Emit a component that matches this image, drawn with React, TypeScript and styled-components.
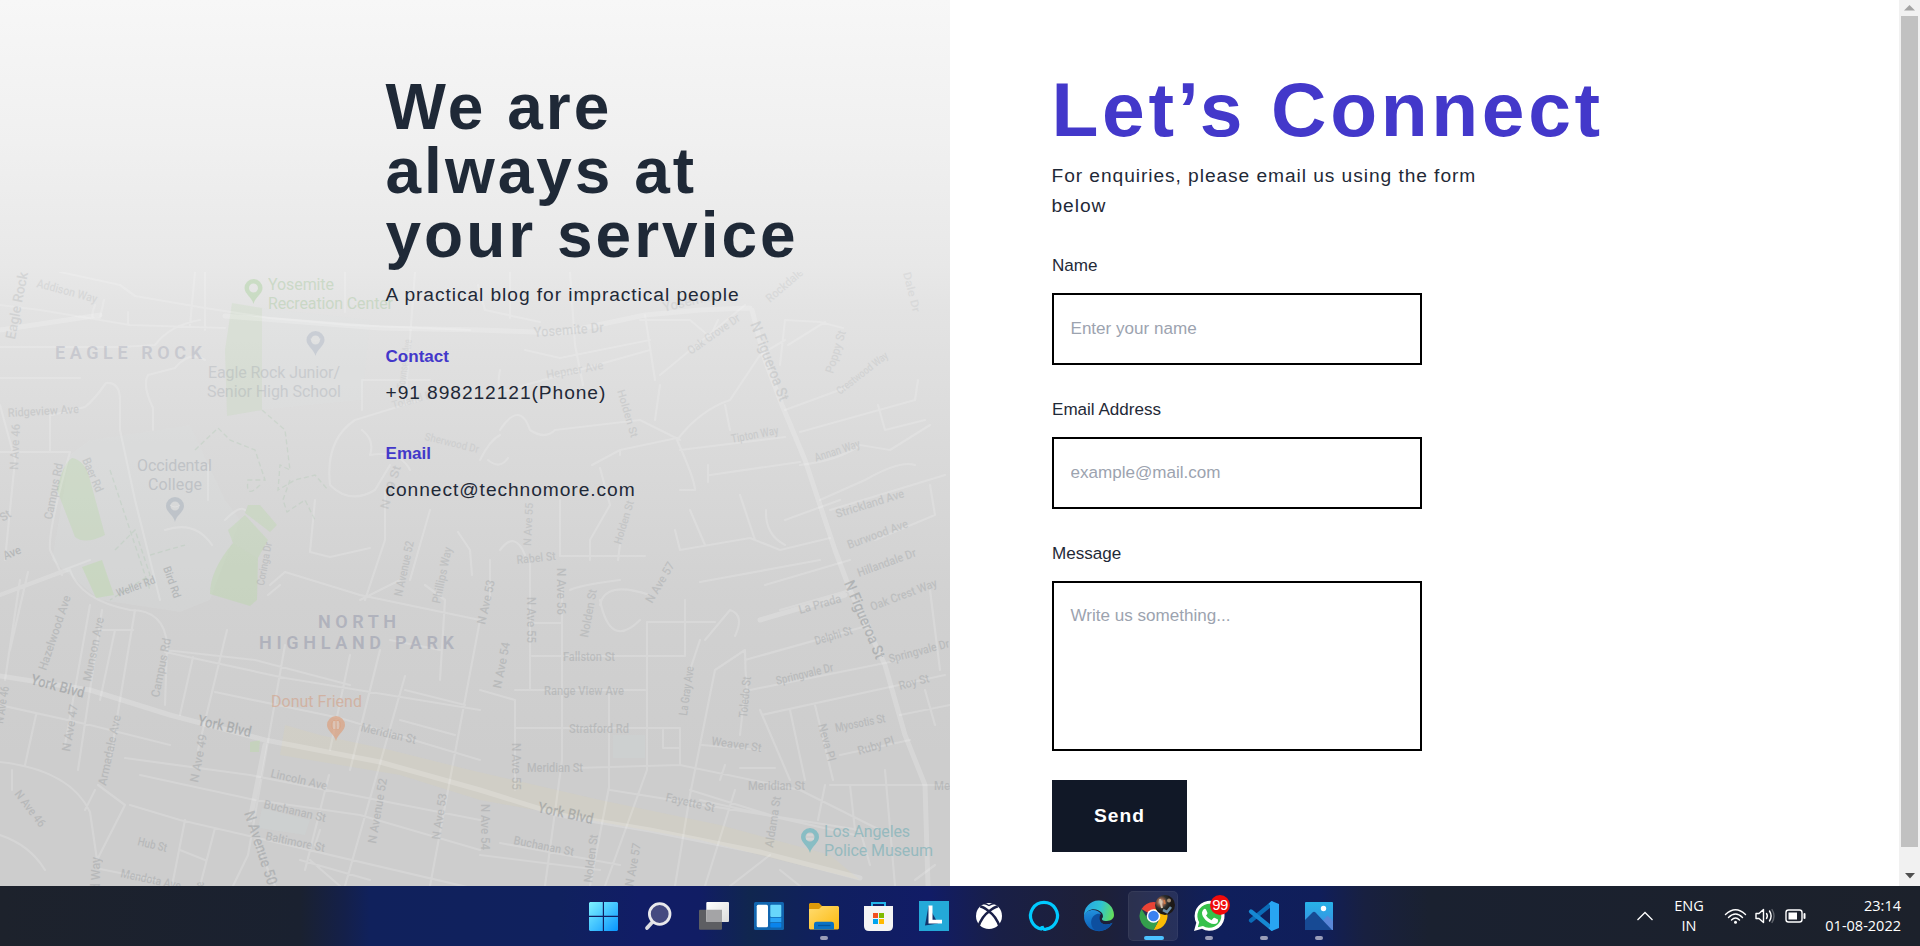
import React from "react";
import styled, { createGlobalStyle } from "styled-components";

const GlobalStyle = createGlobalStyle`
  *, *::before, *::after { box-sizing: border-box; }
  body {
    margin: 0;
    overflow: hidden;
    background: #fff;
    font-family: "Liberation Sans", Arial, sans-serif;
    color: #1f2937;
  }
  h1, h2, p { margin: 0; }
`;

const Desktop = styled.div`
  display: flex;
  flex-direction: column;
  width: 1920px;
  height: 946px;
  overflow: hidden;
`;

const Browser = styled.div`
  display: flex;
  height: 886px;
`;

const Page = styled.main`
  display: flex;
  flex: 1;
`;

const InfoPanel = styled.section`
  position: relative;
  width: 950px;
  padding: 75px 0 0 385.5px;
  overflow: hidden;
  background: linear-gradient(
    180deg,
    #f7f7f7 0%,
    #f0f0f0 16%,
    #e8e8e8 30%,
    #e3e3e3 35%,
    #dadada 50%,
    #d1d1d1 68%,
    #cdcdcd 85%,
    #cdcdcd 100%
  );
`;

const MapArt = styled.svg`
  position: absolute;
  left: 0;
  top: 272px;
  width: 950px;
  height: 614px;
`;

const InfoContent = styled.div`
  position: relative;
  width: 424px;
`;

const Headline = styled.h1`
  font-size: 64px;
  line-height: 64px;
  letter-spacing: 3px;
  font-weight: 700;
`;

const Lead = styled.p<{ $top: number }>`
  margin-top: ${(p) => p.$top}px;
  font-size: 19.2px;
  line-height: 30px;
  letter-spacing: 0.93px;
`;

const InfoTitle = styled.h2<{ $top: number }>`
  margin-top: ${(p) => p.$top}px;
  font-size: 17.07px;
  line-height: 26px;
  font-weight: 700;
  color: #4338ca;
`;

const FormPanel = styled.section`
  flex: 1;
  padding: 71px 0 0 101.5px;
  background: #fff;
`;

const FormTitle = styled.h1`
  font-size: 76.8px;
  line-height: 77px;
  letter-spacing: 3.64px;
  font-weight: 700;
  color: #4338ca;
`;

const FormLead = styled(Lead)`
  width: 455px;
`;

const Form = styled.form`
  display: flex;
  flex-direction: column;
  align-items: flex-start;
  margin-top: 32px;
  padding-left: 0.5px;
`;

const Field = styled.label`
  display: flex;
  flex-direction: column;
  gap: 14px;
  margin-bottom: 32px;
  font-size: 17.07px;
  line-height: 26px;
`;

const fieldBox = `
  display: block;
  width: 370px;
  border: 2px solid #000;
  border-radius: 0;
  background: #fff;
  font: 17.07px/26px "Liberation Sans", Arial, sans-serif;
  color: #1f2937;
  outline: none;
  resize: none;
  &::placeholder { color: #9ca3af; opacity: 1; }
`;

const Input = styled.input`
  ${fieldBox}
  height: 72px;
  padding: 0 16.5px;
`;

const TextArea = styled.textarea`
  ${fieldBox}
  height: 170px;
  padding: 20px 16.5px;
  overflow: hidden;
`;

const SendButton = styled.button`
  width: 135px;
  height: 72px;
  margin-top: -3px;
  padding: 0;
  border: 0;
  background: #111827;
  color: #fff;
  font: 700 19.2px/30px "Liberation Sans", Arial, sans-serif;
  letter-spacing: 0.96px;
`;

const ScrollTrack = styled.div`
  display: flex;
  flex-direction: column;
  align-items: center;
  width: 21px;
  background: #f1f1f1;
`;

const ScrollArrow = styled.div<{ $height: number; $offset?: number }>`
  display: flex;
  align-items: center;
  justify-content: center;
  height: ${(p) => p.$height}px;
  padding-top: ${(p) => p.$offset ?? 0}px;
`;

const ScrollThumb = styled.div`
  width: 17px;
  height: 831px;
  margin-right: 0;
  background: #c1c1c1;
`;

const Taskbar = styled.footer`
  display: flex;
  justify-content: space-between;
  height: 60px;
  padding-left: 578px;
  font-family: "Open Sans", "Noto Sans", sans-serif;
  color: #fff;
  background: linear-gradient(
    90deg,
    #1d222c 0,
    #1a2130 300px,
    #14204a 345px,
    #10215c 370px,
    #10215e 560px,
    #111d66 640px,
    #111d64 700px,
    #10264f 750px,
    #101f60 830px,
    #111c66 930px,
    #191f46 1000px,
    #1e2037 1100px,
    #17204a 1160px,
    #0f1f5c 1220px,
    #101e5a 1320px,
    #182040 1365px,
    #1a2130 1430px,
    #1c212b 1920px
  );
`;

const TaskIcons = styled.nav`
  display: flex;
  gap: 5px;
  padding-top: 5px;
`;

const Tile = styled.div<{ $active?: boolean }>`
  position: relative;
  width: 50px;
  height: 50px;
  border-radius: 5px;
  background: ${(p) => (p.$active ? "rgba(255,255,255,0.08)" : "transparent")};
  box-shadow: ${(p) => (p.$active ? "inset 0 0 0 1px rgba(255,255,255,0.05)" : "none")};
  svg { display: block; }
`;

const Indicator = styled.span<{ $active?: boolean }>`
  position: absolute;
  left: ${(p) => (p.$active ? 16 : 22)}px;
  top: 45px;
  width: ${(p) => (p.$active ? 20 : 8)}px;
  height: 4px;
  border-radius: 2px;
  background: ${(p) => (p.$active ? "#4cc2ff" : "#9a9db8")};
`;

const Badge = styled.span`
  position: absolute;
  left: 27px;
  top: 4px;
  width: 20px;
  height: 20px;
  border-radius: 50%;
  background: #f00b0b;
  color: #fff;
  font: 15px/20px "Liberation Sans", Arial, sans-serif;
  letter-spacing: -0.5px;
  text-align: center;
`;

const Tray = styled.div`
  display: flex;
  align-items: center;
  padding-right: 19px;
  font-size: 14.5px;
  line-height: 20px;
`;

const TrayText = styled.div<{ $align: string; $width: number }>`
  width: ${(p) => p.$width}px;
  text-align: ${(p) => p.$align};
  white-space: nowrap;
`;

const TrayIcons = styled.svg`
  margin: 0 18px 0 18px;
`;

const Chevron = styled.svg`
  margin-right: 19px;
`;

/* Street label: text, start point, end point, size, strength */
type Street = [string, number, number, number, number, number?, number?];

const streets: Street[] = [
  ["Eagle Rock", 15, 340, 28, 273, 14, 0.2],
  ["Addison Way", 36, 287, 96, 303, 12, 0.15],
  ["Ridgeview Ave", 8, 417, 79, 413, 12, 0.22],
  ["N Ave 46", 18, 470, 20, 424, 12, 0.22],
  ["Campus Rd", 52, 520, 63, 464, 12, 0.27],
  ["Baer Rd", 82, 460, 96, 493, 12, 0.25],
  ["St", 3, 522, 12, 516, 12],
  ["Ave", 5, 560, 22, 553, 12, 0.4],
  ["Weller Rd", 118, 597, 156, 583, 11, 0.4],
  ["Bird Rd", 163, 568, 174, 599, 11, 0.4],
  ["Townsend Ave", 405, 389, 412, 340, 12, 0.12],
  ["Toland Dr", 393, 409, 436, 397, 11, 0.12],
  ["Sherwood Dr", 424, 440, 478, 453, 11, 0.14],
  ["N 49 St", 388, 510, 401, 467, 12, 0.22],
  ["N Avenue 52", 402, 597, 414, 542, 12, 0.25],
  ["Phillips Way", 440, 604, 452, 548, 12, 0.25],
  ["Coringa Dr", 264, 586, 272, 543, 11, 0.25],
  ["Yosemite Dr", 534, 337, 604, 332, 14, 0.2],
  ["Yosemite", 664, 312, 718, 299, 14, 0.16],
  ["Hepner Ave", 547, 379, 604, 369, 12, 0.15],
  ["Oak Grove Dr", 691, 355, 741, 320, 12, 0.16],
  ["Rockdale", 770, 303, 804, 274, 12, 0.14],
  ["N Figueroa St", 750, 324, 780, 402, 15, 0.22],
  ["Poppy St", 833, 374, 846, 332, 12, 0.15],
  ["Crestwood Way", 840, 395, 889, 357, 11, 0.15],
  ["Dale Dr", 903, 273, 913, 313, 11, 0.13],
  ["Holden St", 617, 391, 631, 438, 11, 0.2],
  ["Tipton Way", 732, 443, 779, 434, 12, 0.2],
  ["Annan Way", 816, 462, 861, 447, 12, 0.2],
  ["Strickland Ave", 837, 518, 905, 497, 12, 0.25],
  ["Burwood Ave", 849, 549, 909, 527, 12, 0.25],
  ["Hillandale Dr", 859, 577, 917, 556, 12, 0.28],
  ["N Ave 55", 531, 546, 533, 503, 11, 0.22],
  ["Holden St", 621, 545, 634, 502, 11, 0.22],
  ["Rabel St", 517, 564, 556, 560, 12, 0.25],
  ["N Ave 57", 652, 604, 675, 565, 12, 0.28],
  ["Hazelwood Ave", 46, 671, 71, 597, 12],
  ["Munson Ave", 91, 682, 104, 618, 12],
  ["Campus Rd", 159, 698, 171, 639, 12],
  ["York Blvd", 30, 684, 83, 698, 15, 0.5],
  ["York Blvd", 197, 725, 250, 737, 15, 0.5],
  ["York Blvd", 537, 812, 592, 824, 15, 0.5],
  ["N Ave 46", 3, 724, 9, 687, 12],
  ["N Ave 47", 70, 752, 78, 705, 12],
  ["Armadale Ave", 106, 786, 121, 716, 12],
  ["N Ave 49", 198, 783, 207, 735, 12],
  ["N Ave 46", 14, 794, 40, 828, 12],
  ["Hub St", 137, 845, 166, 852, 12],
  ["Mendota Ave", 120, 877, 180, 890, 12],
  ["Wood Way", 100, 915, 100, 857, 12],
  ["N Ave", 204, 904, 204, 882, 12],
  ["N Avenue 50", 244, 813, 268, 886, 15, 0.4],
  ["Meridian St", 360, 731, 415, 744, 12],
  ["Lincoln Ave", 270, 777, 326, 790, 12],
  ["Buchanan St", 263, 808, 325, 822, 12],
  ["Baltimore St", 265, 840, 324, 852, 12],
  ["N Avenue 52", 376, 844, 387, 779, 12],
  ["N Ave 53", 440, 840, 447, 794, 12],
  ["N Ave 53", 485, 625, 495, 581, 12],
  ["N Ave 54", 501, 689, 510, 643, 12],
  ["N Ave 55", 527, 597, 527, 643, 12],
  ["N Ave 56", 557, 568, 557, 615, 12],
  ["N Ave 55", 512, 743, 512, 790, 12],
  ["N Ave 54", 481, 804, 481, 850, 12],
  ["Nolden St", 588, 638, 597, 590, 12, 0.25],
  ["Fallston St", 563, 661, 615, 661, 12],
  ["Range View Ave", 544, 695, 624, 695, 12],
  ["Stratford Rd", 569, 733, 629, 733, 12],
  ["Meridian St", 527, 772, 583, 772, 12],
  ["Meridian St", 748, 790, 805, 790, 12],
  ["Me", 934, 790, 950, 790, 12],
  ["La Prada", 800, 614, 842, 602, 12],
  ["Oak Crest Way", 872, 611, 938, 586, 12, 0.28],
  ["Delphi St", 816, 645, 853, 634, 12],
  ["Springvale Dr", 777, 685, 834, 671, 12],
  ["Springvale Dr", 890, 663, 950, 647, 12],
  ["N Figueroa St", 844, 583, 876, 660, 15, 0.45],
  ["Toledo St", 747, 718, 751, 677, 12],
  ["La Gray Ave", 687, 716, 694, 667, 12],
  ["Roy St", 900, 690, 930, 682, 12],
  ["Myosotis St", 836, 732, 886, 722, 12],
  ["Ruby Pl", 859, 755, 895, 744, 12],
  ["Neva Pl", 818, 725, 828, 762, 12],
  ["Weaver St", 711, 745, 761, 752, 12],
  ["Fayette St", 665, 801, 714, 812, 12],
  ["Aldama St", 773, 848, 781, 797, 12],
  ["Buchanan St", 513, 844, 573, 856, 12],
  ["Nolden St", 592, 883, 598, 835, 12],
  ["N Ave 57", 633, 887, 641, 844, 12],
];

const thinRoads = `
M0 305L40 310 130 325 225 328 M60 272L120 285 135 296 205 308 270 318 350 325 470 330
M95 305Q88 323 100 318L104 300 M128 325V312 M190 325L195 272 M205 272V330 M345 272V312
M415 272L405 405 M478 285L485 310 540 322 M510 272V318 M570 272L575 345 583 385
M0 347H120L155 345Q170 325 200 320 M0 378H80 M120 430V400Q120 382 106 383Q94 400 85 407L52 415
M153 430V408Q142 385 148 375L175 368Q190 350 205 360 M50 415V452 M0 452H70 M0 405L15 460 5 560
M120 430L135 500 160 600 M208 465V500 M70 452Q48 530 50 550L62 575 M0 596L70 570 M165 530Q195 520 212 545
M225 520Q240 505 245 510 M280 585L268 595 M362 410V380H430 M330 485Q325 440 355 420L420 400
M362 430Q375 440 370 455Q400 450 410 470 M330 485Q350 505 375 490L390 465 M385 490V540L365 600
M315 500L310 552 330 557 370 548 M430 510L410 580 M458 532L470 550 472 575
M500 370Q495 395 508 390L650 350 M525 350L560 358 650 340 M645 315L655 380 M640 320H690L710 337 718 320
M660 375L745 305 M660 385L655 420 M500 430Q520 400 530 430Q545 440 555 430L640 420 680 440
M480 460Q490 440 500 435 M488 460Q500 470 508 458 M592 465L620 450 677 438 M620 450V455 M600 468L610 505 590 540V560
M677 440Q700 410 730 400 M677 440Q695 480 695 490L680 490 M680 450L785 437 M710 475L800 462 M708 465V482
M730 400L760 355 785 340 M730 430L725 405 M780 365L785 320 820 322 843 328 M788 345L825 322 
M785 410L845 388 M800 432L915 400 918 380 M878 405L885 430 925 420 M800 465Q840 460 860 445L890 450 930 425
M820 500L865 480 Q900 460 915 465 M830 510L945 475 M875 540L935 515 930 485 M820 560L700 582 M785 520L840 500
M675 530L680 550 750 538 780 550 830 538 M740 495L755 540 M766 510Q765 535 785 545 M690 510L705 545
M560 500V556 M620 545L618 560 M560 556H645 M500 550Q515 530 525 555 M490 560V600 M620 580Q580 585 570 590
M0 594L90 560 M70 570Q80 600 130 610Q165 610 167 645L165 705 M20 580L5 680 M90 605L65 745 M102 610L78 770
M135 610L110 760 M115 630L100 700 M102 630H133 M165 650L255 660 350 685 M193 657L180 715 M227 630L198 750
M0 705L90 725 170 745 M28 572L10 650 M36 715L25 765 M285 645L248 855 233 886 M350 655L330 750 M380 650L350 770
M165 652L285 678 480 710 M215 692L340 718 480 760 M405 676L345 886 M480 620L430 886 M390 640L440 650
M270 585L285 572 360 595 480 620 M400 580L360 600 M425 585L445 600 440 680 M405 690L465 705 M400 720L455 735
M0 762Q70 770 90 812L97 860 M97 860L125 805 98 785 M85 810L95 790 M130 805L180 820 245 835 480 890
M125 758L250 775 480 820 M140 775L255 800 360 815 480 850 M185 820L172 886 M215 828L200 886
M0 835Q30 845 45 870 M12 770V790 M100 869L155 880 M300 860L370 880 M255 840L275 886
M329 775L305 870 M310 860L340 886 M180 850L205 860 M320 830L315 845
M480 690L515 700V790 M530 560V690 M562 590V760L545 886 M532 623H562 M515 690L645 690 M515 728H680V765L575 768
M532 656H685V600 M647 622V770L605 886 M647 622H715 M609 693V787L590 886 M600 605Q605 580 650 595
M600 600Q610 650 640 620 M680 765L800 790 880 830 M663 730V748H680 M715 670L690 795 675 886
M715 670L745 650Q745 670 747 690 M735 636Q745 615 730 610L705 640 M745 690L740 735 M700 640L690 670
M760 710L790 780 M790 710L805 780 M815 705L833 780 M745 660L870 625 M750 690L900 660
M762 715L945 675 M702 745L760 750 M725 765L720 780 M740 768H775 M735 790L705 886
M830 785H950 M825 785L818 820 M850 785L855 830 M885 770L895 886 M930 590L940 670 M900 715L950 705
M925 690L935 725 M840 755L910 740 M610 790L860 830 M690 790L770 815 M700 800L855 835
M480 855L600 870 M500 843L620 865 M860 830L870 865 M730 886L770 855 M780 870L800 886 M915 880L935 865
M765 585L850 560 M780 610L850 590`;

const wideRoads = `
M0 676L90 690 170 715 265 740 380 762 480 790 560 815 650 830 760 852 860 878
M265 745L250 820
M0 330L100 315 M225 316L380 328 480 330 560 333 645 315 700 310 750 308
M752 310L765 360 782 405 805 460 835 550 850 590 885 665 905 735 925 785 928 886
M760 620L845 595`;

/* Park outline and how strongly it is tinted */
const greenAreas: [string, number][] = [
  ["M232 303L262 308 262 410 227 416 225 350Z", 0.2],
  ["M72 458Q85 460 90 480L105 535Q85 545 75 537L57 490Q62 465 72 458Z", 0.36],
  ["M82 567L102 560 114 595 96 598Z", 0.42],
  ["M228 530L245 515 268 540 258 558 233 543Z M248 505L260 505 277 525 270 532 245 513Z", 0.34],
  ["M233 543L258 558 257 600 250 606 210 594Q210 570 233 543Z", 0.4],
  ["M250 742L260 740 259 752 250 752Z", 0.42],
];

function StreetLabel({ street }: { street: Street }) {
  const [name, x1, y1, x2, y2, size = 12, strength = 0.3] = street;
  const angle = (Math.atan2(y2 - y1, x2 - x1) * 180) / Math.PI;
  return (
    <text
      transform={`translate(${x1} ${y1}) rotate(${angle})`}
      fontSize={size}
      textLength={Math.hypot(x2 - x1, y2 - y1)}
      lengthAdjust="spacingAndGlyphs"
      fill="#6d7478"
      fontWeight="500"
      opacity={strength * 0.72}
    >
      {name}
    </text>
  );
}

function MapPin({ x, y, color, opacity }: { x: number; y: number; color: string; opacity: number }) {
  return (
    <g transform={`translate(${x} ${y})`} opacity={opacity}>
      <path
        fill={color}
        fillRule="evenodd"
        d="M0 16C-1.5 9-9 6-9 0A9 9 0 0 1 9 0C9 6 1.500 9 0 16ZM0-4.500A4.500 4.500 0 0 0 0 4.500A4.500 4.500 0 0 0 0-4.500Z"
      />
    </g>
  );
}

function StreetMap() {
  return (
    <MapArt viewBox="0 272 950 614" fontFamily="Roboto, sans-serif" aria-hidden="true">
      <g fill="#dbe6e6" opacity="0.18">
        <path d="M262 308L370 320 362 400 262 410Z" />
        <path d="M90 440L190 425 225 500 240 520 210 600 180 612 100 600 52 560 70 455Z" />
        <path d="M262 808L310 820 305 835 258 828Z M613 735H645V758H613Z" fill="#cfdde0" />
      </g>
      <g fill="#b9d8a8">
        {greenAreas.map(([d, tint]) => (
          <path key={d} d={d} opacity={tint} />
        ))}
      </g>
      <g fill="#e2d3a4" opacity="0.17">
        <path d="M285 725L320 735 390 750 470 770 600 800 720 825 830 855 860 880 840 875 700 840 480 800 400 775 280 755Z" />
      </g>
      <g fill="none" stroke="#9fc4a4" strokeWidth="1.3" strokeDasharray="5 3" opacity="0.25">
        <path d="M195 450L218 428 230 440 255 450 265 480 248 480Q245 500 260 485 M262 410L285 430 290 470 280 465 278 490 295 480 315 475 328 490 M290 480L283 500 287 512 305 500 315 520" />
        <path d="M110 470L130 530 150 590 M115 550L135 530 150 575 110 600 M150 555L185 545" />
      </g>
      <g fill="none" stroke="#ffffff" strokeLinejoin="round" strokeLinecap="round">
        <path d={thinRoads} strokeWidth="2.2" opacity="0.17" />
        <path d={wideRoads} strokeWidth="5" opacity="0.19" />
      </g>
      {streets.map((street, i) => (
        <StreetLabel key={i} street={street} />
      ))}
      <g fill="#8b8fa5" opacity="0.28" fontWeight="600" fontSize="18">
        <text x="55" y="359" textLength="147">EAGLE ROCK</text>
      </g>
      <g fill="#8b8fa5" opacity="0.45" fontWeight="600" fontSize="18">
        <text x="318" y="628" textLength="78">NORTH</text>
        <text x="259" y="649" textLength="195">HIGHLAND PARK</text>
      </g>
      <g fontSize="16">
        <g fill="#8fbc82" opacity="0.3">
          <text x="268" y="290" textLength="66">Yosemite</text>
          <text x="268" y="309" textLength="125">Recreation Center</text>
        </g>
        <g fill="#8b929d" opacity="0.25">
          <text x="208" y="378" textLength="132">Eagle Rock Junior/</text>
          <text x="207" y="397" textLength="134">Senior High School</text>
        </g>
        <g fill="#8b929d" opacity="0.32">
          <text x="137" y="471" textLength="75">Occidental</text>
          <text x="148" y="490" textLength="54">College</text>
        </g>
        <text x="271" y="707" textLength="91" fill="#d4916e" opacity="0.45">Donut Friend</text>
        <g fill="#72adb5" opacity="0.6">
          <text x="824" y="837" textLength="86">Los Angeles</text>
          <text x="824" y="856" textLength="109">Police Museum</text>
        </g>
      </g>
      <MapPin x={253.5} y={288} color="#a8d19c" opacity={0.45} />
      <MapPin x={315.5} y={340} color="#9fa9bd" opacity={0.35} />
      <MapPin x={175} y={506} color="#98a5b5" opacity={0.4} />
      <MapPin x={336} y={725} color="#e09468" opacity={0.55} />
      <MapPin x={810} y={837} color="#62b4bf" opacity={0.65} />
      <circle cx="336" cy="725" r="5" fill="#e09468" opacity="0.5" />
      <path d="M334 721V729M338 721V729M806 839H814M807 835H813M310.500 339Q315.500 343 320.500 339M170 505Q175 509 180 505" stroke="#e4e4e4" fill="none" opacity="0.7" />
    </MapArt>
  );
}

const icons: { name: string; art: React.ReactNode; running?: boolean; active?: boolean; badge?: string }[] = [
  {
    name: "start",
    art: (
      <>
        <defs>
          <linearGradient id="win" x1="11" y1="11" x2="40" y2="40" gradientUnits="userSpaceOnUse">
            <stop stopColor="#7ff3ff" />
            <stop offset="1" stopColor="#0895ff" />
          </linearGradient>
        </defs>
        <path fill="url(#win)" d="M12 11H24.800V24.800H11V12ZM26 11H39L40 12V24.800H26ZM11 26H24.800V40H12L11 39ZM26 26H40V39L39 40H26Z" />
      </>
    ),
  },
  {
    name: "search",
    art: (
      <>
        <path d="M19 31.500L14 37" stroke="#dcdde2" strokeWidth="3.800" strokeLinecap="round" />
        <circle cx="26.700" cy="23" r="10.300" fill="#454a80" stroke="#e9e9ec" strokeWidth="2.800" />
      </>
    ),
  },
  {
    name: "task view",
    art: (
      <>
        <defs>
          <linearGradient id="tv" x1="0" y1="0" x2="1" y2="1">
            <stop stopColor="#fff" />
            <stop offset="1" stopColor="#dcdcdc" />
          </linearGradient>
        </defs>
        <rect x="11" y="18.700" width="23" height="20" rx="1" fill="#5d5e62" />
        <rect x="18.300" y="11" width="22.700" height="20" rx="1" fill="url(#tv)" />
        <path d="M18.300 18.700H34V31H19.300L18.300 30Z" fill="#a4a4a6" />
      </>
    ),
  },
  {
    name: "widgets",
    art: (
      <>
        <rect x="11" y="11" width="30" height="28" rx="1.500" fill="#1166b0" />
        <rect x="13.700" y="13.700" width="11.300" height="22.600" rx="1.500" fill="#fff" />
        <rect x="27.300" y="13.700" width="11" height="12.300" rx="1" fill="#68d6fb" />
        <rect x="27.300" y="26.700" width="11" height="4.500" fill="#2aa4f6" />
        <rect x="27.300" y="32" width="11" height="4.500" rx="1" fill="#0a84ec" />
      </>
    ),
  },
  {
    name: "file explorer",
    running: true,
    art: (
      <>
        <defs>
          <linearGradient id="fe" x1="0" y1="0" x2="1" y2="1">
            <stop stopColor="#ffdc70" />
            <stop offset="1" stopColor="#fcb90e" />
          </linearGradient>
        </defs>
        <path fill="#dd9a0a" d="M12 12H21L24 15H30V20H11V13Z" />
        <path fill="url(#fe)" d="M11 18H21L24 15H40L41 16V37.500L40 38.500H12L11 37.500Z" />
        <path fill="#0a72c4" d="M16 38.500V33Q16 30.700 18.500 30.700H33.500Q36 30.700 36 33V38.500Z" />
        <path d="M20 34.500H32.500" stroke="#04549a" strokeWidth="1.300" />
      </>
    ),
  },
  {
    name: "store",
    art: (
      <>
        <path d="M19 16V12H32V16" fill="none" stroke="#23b5e9" strokeWidth="2" />
        <path fill="#f4f4f4" d="M11 15H40V35Q40 40 35 40H16Q11 40 11 35Z" />
        <path fill="#f25022" d="M20 22H25V27H20Z" />
        <path fill="#7fba00" d="M26 22H31V27H26Z" />
        <path fill="#00a4ef" d="M20 28H25V33H20Z" />
        <path fill="#ffb900" d="M26 28H31V33H26Z" />
      </>
    ),
  },
  {
    name: "l app",
    art: (
      <>
        <path fill="#24a9d8" d="M11 10H41V40H11Z" />
        <path fill="#12356d" d="M20.500 15L17 34.500 30 32.500Z" />
        <path fill="#fff" d="M20.500 14.500H24.500V28.800H34V32.500H20.500Z" />
      </>
    ),
  },
  {
    name: "xbox",
    art: (
      <>
        <circle cx="26" cy="25" r="13" fill="#fff" />
        <path d="M15 36.500Q19 25 26 20.500Q33 25 37 36.500" fill="none" stroke="#191f48" strokeWidth="2.600" />
        <path d="M26 20.500Q21 16 17.200 15.500M26 20.500Q31 16 34.800 15.500" fill="none" stroke="#191f48" strokeWidth="2.600" />
        <path d="M20 12.500Q23 12.500 26 14.500Q29 12.500 32 12.500" fill="none" stroke="#191f48" strokeWidth="1.300" />
      </>
    ),
  },
  {
    name: "alexa",
    art: <path d="M24 38.200A13.500 13.500 0 1 1 28 38.200Q24.500 39 24 35" fill="none" stroke="#00caff" strokeWidth="3.200" />,
  },
  {
    name: "edge",
    art: (
      <>
        <defs>
          <linearGradient id="edg" x1="12" y1="16" x2="41" y2="24" gradientUnits="userSpaceOnUse">
            <stop stopColor="#27a6e4" />
            <stop offset=".5" stopColor="#2fc3d2" />
            <stop offset="1" stopColor="#67df55" />
          </linearGradient>
          <linearGradient id="edb" x1="0" y1="0" x2="0" y2="1">
            <stop stopColor="#2190dd" />
            <stop offset="1" stopColor="#0c5db5" />
          </linearGradient>
        </defs>
        <path fill="url(#edb)" d="M11 25C13 18 24 17 28 23C23 24 26 34 33 33.500Q37 33.500 39.500 31.800A15 15 0 0 1 11 25Z" />
        <path fill="#0d4f9f" d="M22 39.300C14 32 20 21 27.500 23C25 29 28 34 34 33.500Q37 33.500 39.500 31.800C37 37.500 30 41 22 39.300Z" />
        <path fill="url(#edg)" d="M11 25A15 15 0 0 1 41 24C41 29 36 30 32.500 30Q28.500 29.500 29 27.500Q31 25.500 29 22C24 16 14 17 11 25Z" />
      </>
    ),
  },
  {
    name: "chrome",
    active: true,
    art: (
      <>
        <defs>
          <radialGradient id="av" cx=".3" cy=".35">
            <stop stopColor="#e8dccb" />
            <stop offset=".35" stopColor="#93604a" />
            <stop offset=".65" stopColor="#2c302e" />
            <stop offset="1" stopColor="#1d1917" />
          </radialGradient>
        </defs>
        <path fill="#ea4335" d="M25.500 25L13.500 18A13.900 13.900 0 0 1 37.500 18Z" />
        <path fill="#fbbc05" d="M25.500 18H37.500A13.900 13.900 0 0 1 25.500 38.900L31.500 28Z" />
        <path fill="#34a04c" d="M13.500 18L20 28.500 30 31 25.500 38.900A13.900 13.900 0 0 1 13.500 18Z" />
        <circle cx="25.500" cy="25" r="6.800" fill="#fff" />
        <circle cx="25.500" cy="25" r="5.300" fill="#3b82f0" />
        <circle cx="37" cy="14" r="10" fill="url(#av)" />
        <path d="M32 8L34 17" stroke="#d8c4ae" strokeWidth="2" />
        <path d="M36 9L37 13" stroke="#d47b48" strokeWidth="1.500" />
        <path d="M35 19L39 21 43 16" stroke="#6e90a6" strokeWidth="2.600" fill="none" />
        <circle cx="41" cy="9.500" r="2" fill="#a58d74" />
      </>
    ),
  },
  {
    name: "whatsapp",
    running: true,
    badge: "99",
    art: (
      <>
        <path fill="#fff" d="M11 40L13.300 31.800A15 15 0 1 1 19 37.800Z" />
        <path fill="#35c14b" d="M14.800 36.200L16.200 31.200A12 12 0 1 1 20 35Z" />
        <path fill="#fff" d="M20.500 18.500Q22 17 23 18.500L24.500 22Q24.500 23 23 24.500Q25 28 28.500 29.200L30.500 27Q31.300 26.500 32 27L35 28.500Q35.500 33 31 33C25 33 18.500 26 19 21.500Q19.500 19.500 20.500 18.500Z" />
      </>
    ),
  },
  {
    name: "vs code",
    running: true,
    art: (
      <>
        <path d="M13 29.500L34 12.500" stroke="#0b6cb8" strokeWidth="4.200" strokeLinecap="round" />
        <path d="M13 20.500L34 37.500" stroke="#1688d2" strokeWidth="4.200" strokeLinecap="round" />
        <path fill="#28a5f2" d="M33.500 10L41 13V37L33.500 40L30.500 37 32 36V14L30.500 13Z" />
      </>
    ),
  },
  {
    name: "photos",
    running: true,
    art: (
      <>
        <defs>
          <linearGradient id="ph" x1="0" y1="0" x2="0" y2="1">
            <stop stopColor="#27b2e8" />
            <stop offset="1" stopColor="#3b8ae0" />
          </linearGradient>
        </defs>
        <rect x="12" y="11" width="28" height="28" rx="1" fill="url(#ph)" />
        <path fill="#5a87d8" d="M25 36L33.500 25.500Q34.500 24.500 35.500 25.500L40 30V39H25Z" />
        <path fill="#174a94" d="M12 29L19.500 21.500Q21 20 22.500 21.500L39 39H12Z" />
        <circle cx="30.500" cy="17.500" r="2.700" fill="#fff" />
      </>
    ),
  },
];

export default function App() {
  return (
    <Desktop>
      <GlobalStyle />
      <Browser>
        <Page>
          <InfoPanel>
            <StreetMap />
            <InfoContent>
              <Headline>We are always at your service</Headline>
              <Lead $top={13}>A practical blog for impractical people</Lead>
              <InfoTitle $top={34}>Contact</InfoTitle>
              <Lead $top={8}>+91 898212121(Phone)</Lead>
              <InfoTitle $top={33}>Email</InfoTitle>
              <Lead $top={8}>connect@technomore.com</Lead>
            </InfoContent>
          </InfoPanel>
          <FormPanel>
            <FormTitle>Let’s Connect</FormTitle>
            <FormLead $top={13}>For enquiries, please email us using the form below</FormLead>
            <Form onSubmit={(e) => e.preventDefault()}>
              <Field>
                Name
                <Input placeholder="Enter your name" />
              </Field>
              <Field>
                Email Address
                <Input placeholder="example@mail.com" />
              </Field>
              <Field>
                Message
                <TextArea placeholder="Write us something..." />
              </Field>
              <SendButton>Send</SendButton>
            </Form>
          </FormPanel>
        </Page>
        <ScrollTrack>
          <ScrollArrow $height={16} $offset={-2}>
            <svg width="11" height="6" viewBox="0 0 11 6"><path d="M0 5.500L5.500 0 11 5.500Z" fill="#a3a3a3" /></svg>
          </ScrollArrow>
          <ScrollThumb />
          <ScrollArrow $height={39} $offset={18}>
            <svg width="10" height="6" viewBox="0 0 10 6"><path d="M0 0H10L5 5.500Z" fill="#505050" /></svg>
          </ScrollArrow>
        </ScrollTrack>
      </Browser>
      <Taskbar>
        <TaskIcons>
          {icons.map((icon) => (
            <Tile key={icon.name} $active={icon.active}>
              <svg width="50" height="50" viewBox="0 0 50 50">{icon.art}</svg>
              {icon.badge && <Badge>{icon.badge}</Badge>}
              {(icon.running || icon.active) && <Indicator $active={icon.active} />}
            </Tile>
          ))}
        </TaskIcons>
        <Tray>
          <Chevron width="18" height="12" viewBox="0 0 18 12">
            <path d="M1.500 10L9 2.500 16.500 10" fill="none" stroke="#fff" strokeWidth="1.300" />
          </Chevron>
          <TrayText $align="center" $width={32}>
            <div>ENG</div>
            <div>IN</div>
          </TrayText>
          <TrayIcons width="84" height="20" viewBox="0 0 84 20" fill="none" stroke="#fff" strokeWidth="1.400" strokeLinecap="round">
            <path d="M2.500 8.500Q12.500-1 22.500 8.500M5.500 11.500Q12.500 4.500 19.500 11.500M8.500 14Q12.500 10 16.500 14" />
            <circle cx="12.500" cy="16.300" r="1.500" fill="#fff" stroke="none" />
            <path d="M33 7.500H36L40.500 3.500V16.500L36 12.500H33Z" strokeLinejoin="round" />
            <path d="M43.500 7.500Q45.200 10 43.500 12.500M46.500 5Q49.700 10 46.500 15" />
            <path d="M49 3.500Q53 10 49 16.500" opacity="0.3" />
            <rect x="63" y="4" width="16" height="12" rx="2.500" />
            <path d="M81.500 8V12" strokeWidth="2" />
            <rect x="65.500" y="6.500" width="8.500" height="7" fill="#fff" stroke="none" />
          </TrayIcons>
          <TrayText $align="right" $width={76}>
            <div>23:14</div>
            <div>01-08-2022</div>
          </TrayText>
        </Tray>
      </Taskbar>
    </Desktop>
  );
}
